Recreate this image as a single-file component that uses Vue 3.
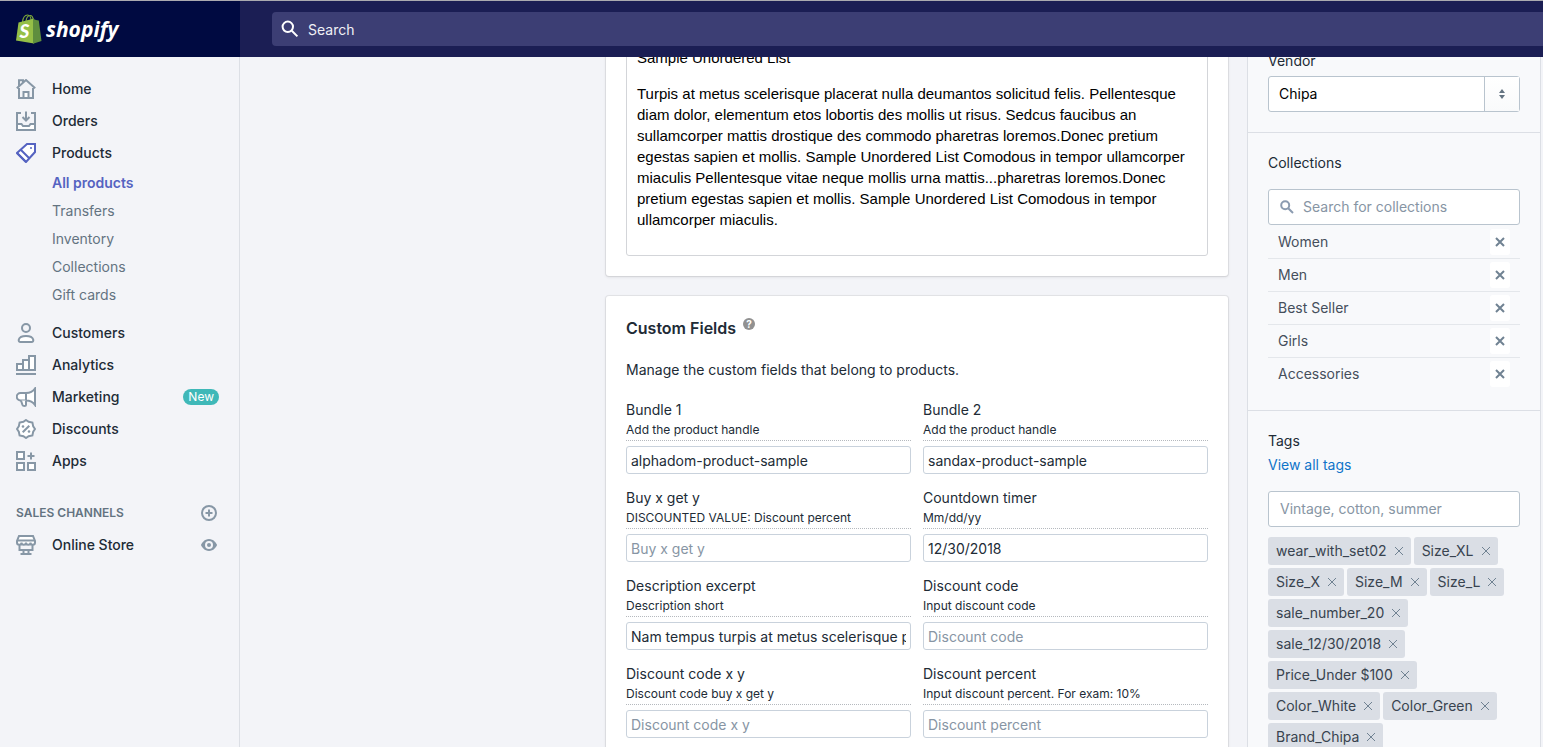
<script setup>
import { ref } from 'vue'

const productLinks = ['All products', 'Transfers', 'Inventory', 'Collections', 'Gift cards']

const fields = ref([
  { id: 'bundle-1', label: 'Bundle 1', hint: 'Add the product handle', value: 'alphadom-product-sample' },
  { id: 'bundle-2', label: 'Bundle 2', hint: 'Add the product handle', value: 'sandax-product-sample' },
  { id: 'buy-x', label: 'Buy x get y', hint: 'DISCOUNTED VALUE: Discount percent', value: '' },
  { id: 'timer', label: 'Countdown timer', hint: 'Mm/dd/yy', value: '12/30/2018' },
  { id: 'excerpt', label: 'Description excerpt', hint: 'Description short', value: 'Nam tempus turpis at metus scelerisque placerat' },
  { id: 'code', label: 'Discount code', hint: 'Input discount code', value: '' },
  { id: 'code-xy', label: 'Discount code x y', hint: 'Discount code buy x get y', value: '' },
  { id: 'percent', label: 'Discount percent', hint: 'Input discount percent. For exam: 10%', value: '' },
])

const collections = ref(['Women', 'Men', 'Best Seller', 'Girls', 'Accessories'])
const tags = ref([
  'wear_with_set02', 'Size_XL', 'Size_X', 'Size_M', 'Size_L', 'sale_number_20',
  'sale_12/30/2018', 'Price_Under $100', 'Color_White', 'Color_Green', 'Brand_Chipa',
])
const vendor = ref('Chipa')
const remove = (list, i) => list.splice(i, 1)
</script>

<template>
  <div class="app">
    <header class="topbar">
      <a class="brand" href="#">
        <svg class="bag" viewBox="0 0 26 30" aria-hidden="true">
          <path d="M6.500 8C7 4 9 1 11.500 1c2.500 0 3.500 2.500 3.700 6M10 7c.5-3.500 2.500-5.500 4.300-5.500S17 4 17.200 6" fill="none" stroke="#7ba83a" stroke-width="1.200" />
          <path d="M2.500 8.500 18 4.500v25L0 26.500z" fill="#95bf47" />
          <path d="M17 4.800 20 6l2.800.6L25.500 27 17 29.700z" fill="#5e8e3e" />
          <text x="3.500" y="23.500" class="bag-letter">S</text>
        </svg>
        <span class="wordmark">shopify</span>
      </a>
      <div class="search-zone">
        <label class="search">
          <svg viewBox="0 0 18 18" aria-hidden="true"><circle cx="6.800" cy="6.800" r="5.200" /><path d="m10.800 10.800 5.600 5.600" /></svg>
          <input type="search" placeholder="Search" aria-label="Search" />
        </label>
      </div>
    </header>

    <div class="body">
      <nav class="nav">
        <a class="item" href="#">
          <svg viewBox="0 0 20 20" aria-hidden="true"><path d="M3 9v10h14V9" /><path d="M.8 9.200 10 1l9.200 8.200M3 7V1.200h4V3" /><path class="lit" d="M7.500 19v-6h5v6z" /></svg>
          <span>Home</span>
        </a>
        <a class="item" href="#">
          <svg viewBox="0 0 20 20" aria-hidden="true"><path d="M5 2H1v17h18V2h-4" /><path class="lit" d="M1 13h4.500l1.500 2h6l1.500-2H19v6H1z" /><path d="M10 .5v8.500M6.500 6 10 9.500 13.500 6" /></svg>
          <span>Orders</span>
        </a>
        <a class="item current" href="#">
          <svg viewBox="0 0 20 20" aria-hidden="true"><path class="lit" d="M11 1h8v8L10 19l-9-9z" /><path d="m4.500 6.500 9 9M1 10l9 9" /><circle class="dot" cx="15" cy="5" r="1" /></svg>
          <span>Products</span>
        </a>
        <div class="sub">
          <a v-for="(link, i) in productLinks" :key="link" href="#" :class="{ active: i === 0 }">{{ link }}</a>
        </div>
        <a class="item" href="#">
          <svg viewBox="0 0 20 20" aria-hidden="true"><circle cx="10" cy="5" r="4" /><path class="lit" d="M2.800 16.500C3.500 14 6.500 13 10 13s6.500 1 7.200 3.500c.4 1.500-.4 2.500-1.700 2.500h-11c-1.300 0-2.100-1-1.700-2.500z" /></svg>
          <span>Customers</span>
        </a>
        <a class="item" href="#">
          <svg viewBox="0 0 20 20" aria-hidden="true"><path class="lit" d="M1 9h6v6H1zM7 5h6v10H7zM13 1h6v14h-6z" /><path d="M0 19h20" /></svg>
          <span>Analytics</span>
        </a>
        <a class="item" href="#">
          <svg viewBox="0 0 20 20" aria-hidden="true"><path class="lit" d="M10 6v7.500H4.500a3.700 3.700 0 0 1 0-7.500zM10 6c4 0 7-1.500 9-4.500v16.500c-2-3-5-4.500-9-4.500z" /><path class="lit" d="m5 13.500 1.500 4.500c.4 1.300 3.500 1.300 3.500 0v-4.500" /></svg>
          <span>Marketing</span>
          <span class="badge">New</span>
        </a>
        <a class="item" href="#">
          <svg viewBox="0 0 20 20" aria-hidden="true"><path class="lit" d="m10 1 2.600 1.800 3.800.8.800 3.800L19 10l-1.800 2.600-.8 3.800-3.800.8L10 19l-2.600-1.800-3.800-.8-.8-3.800L1 10l1.800-2.600.8-3.800 3.800-.8z" /><path d="m6.700 13.300 6.600-6.600" /><circle class="dot" cx="7" cy="7.500" r="1.300" /><circle class="dot" cx="13" cy="12.500" r="1.300" /></svg>
          <span>Discounts</span>
        </a>
        <a class="item" href="#">
          <svg viewBox="0 0 20 20" aria-hidden="true"><path class="lit" d="M1 1h7v7H1zM1 12h7v7H1zM12 12h7v7h-7z" /><path d="M15 1.500v7M11.500 5h7" /></svg>
          <span>Apps</span>
        </a>
        <div class="channels">
          <h2>SALES CHANNELS</h2>
          <button type="button" aria-label="Add sales channel">
            <svg viewBox="0 0 16 16" aria-hidden="true"><circle cx="8" cy="8" r="7" /><path d="M8 4.500v7M4.500 8h7" /></svg>
          </button>
        </div>
        <div class="item">
          <svg viewBox="0 0 20 20" aria-hidden="true"><path class="lit" d="M3 1h14l2 5v1.500a2.200 2.200 0 0 1-4.500 0 2.200 2.200 0 0 1-4.500 0 2.200 2.200 0 0 1-4.500 0A2.200 2.200 0 0 1 1 7.500V6z" /><path d="M1 5.500h18M3.500 9.500V15h13V9.500M7.500 15v3.500M12.500 15v3.500M4.500 19h11" /></svg>
          <a href="#">Online Store</a>
          <button class="eye" type="button" aria-label="View online store">
            <svg viewBox="0 0 16 16" aria-hidden="true"><path d="M8 2C3.500 2 .8 5.800 0 8c.8 2.200 3.500 6 8 6s7.200-3.800 8-6c-.8-2.200-3.500-6-8-6z" /><circle class="ring" cx="8" cy="8" r="3" /></svg>
          </button>
        </div>
      </nav>

      <main class="main">
        <div class="page">
          <div class="primary">
            <section class="card description">
              <div class="editor">
                <p>Sample Unordered List</p>
                <p>Turpis at metus scelerisque placerat nulla deumantos solicitud felis. Pellentesque diam dolor, elementum etos lobortis des mollis ut risus. Sedcus faucibus an sullamcorper mattis drostique des commodo pharetras loremos.Donec pretium egestas sapien et mollis. Sample Unordered List Comodous in tempor ullamcorper miaculis Pellentesque vitae neque mollis urna mattis...pharetras loremos.Donec pretium egestas sapien et mollis. Sample Unordered List Comodous in tempor ullamcorper miaculis.</p>
              </div>
            </section>
            <section class="card custom">
              <div class="title">
                <h2>Custom Fields</h2>
                <button type="button" aria-label="Help">?</button>
              </div>
              <p>Manage the custom fields that belong to products.</p>
              <div class="fields">
                <div v-for="f in fields" :key="f.id" class="field">
                  <label :for="f.id">{{ f.label }}</label>
                  <small>{{ f.hint }}</small>
                  <input :id="f.id" v-model="f.value" type="text" :placeholder="f.label" />
                </div>
              </div>
            </section>
          </div>

          <aside class="aside">
            <section class="vendor">
              <label for="vendor">Vendor</label>
              <div class="select">
                <select id="vendor" v-model="vendor"><option>Chipa</option></select>
                <span class="stepper">
                  <svg viewBox="0 0 6 10" aria-hidden="true"><path d="M0 4 3 0l3 4zM0 6h6l-3 4z" /></svg>
                </span>
              </div>
            </section>
            <section>
              <label for="collections">Collections</label>
              <div class="textbox">
                <svg viewBox="0 0 14 14" aria-hidden="true"><circle cx="5.200" cy="5.200" r="4" /><path d="m8.200 8.200 4.800 4.800" /></svg>
                <input id="collections" type="text" placeholder="Search for collections" />
              </div>
              <ul class="rows">
                <li v-for="(c, i) in collections" :key="c">
                  <span>{{ c }}</span>
                  <button type="button" :aria-label="`Remove ${c}`" @click="remove(collections, i)">
                    <svg viewBox="0 0 10 10" aria-hidden="true"><path d="m1 1 8 8M9 1 1 9" /></svg>
                  </button>
                </li>
              </ul>
            </section>
            <section>
              <label for="tags">Tags</label>
              <a class="all" href="#">View all tags</a>
              <div class="textbox">
                <input id="tags" type="text" placeholder="Vintage, cotton, summer" />
              </div>
              <ul class="tags">
                <li v-for="(t, i) in tags" :key="t">
                  <span>{{ t }}</span>
                  <button type="button" :aria-label="`Remove ${t}`" @click="remove(tags, i)">
                    <svg viewBox="0 0 8 8" aria-hidden="true"><path d="m0 0 8 8M8 0 0 8" /></svg>
                  </button>
                </li>
              </ul>
            </section>
          </aside>
        </div>
      </main>
    </div>
  </div>
</template>

<style>
body {
  margin: 0;
  background: #f3f4f8;
}
</style>

<style scoped>
* {
  box-sizing: border-box;
}
.app {
  display: flex;
  flex-direction: column;
  height: 100vh;
  overflow: hidden;
  font: 14px/20px Inter, "Liberation Sans", sans-serif;
  color: #212b36;
}
h2, p, ul {
  margin: 0;
  padding: 0;
}
ul {
  list-style: none;
}
a {
  color: inherit;
  text-decoration: none;
}
input, select, button {
  font: inherit;
  color: inherit;
  border: 0;
  padding: 0;
  margin: 0;
  background: none;
  min-width: 0;
}
button {
  display: flex;
  align-items: center;
  justify-content: center;
}
svg {
  display: block;
  flex: none;
  fill: none;
  stroke: currentColor;
}
input::placeholder {
  color: #8795a4;
  opacity: 1;
}

/* Top bar */
.topbar {
  display: flex;
  flex: none;
  height: 57px;
  border-top: 1px solid #aaaab0;
  background: #1b1e54;
}
.brand {
  display: flex;
  align-items: center;
  gap: 4px;
  width: 240px;
  padding-left: 16px;
  background: #000a41;
  color: #fff;
}
.bag {
  width: 26px;
  height: 30px;
  stroke: none;
}
.bag-letter {
  fill: #fff;
  font: italic 900 19px Lato, sans-serif;
}
.wordmark {
  font: italic 700 21px/30px "Open Sans", sans-serif;
}
.search-zone {
  flex: 1;
  padding: 11px 0 11px 32px;
}
.search {
  display: flex;
  align-items: center;
  gap: 9px;
  height: 34px;
  padding-left: 9px;
  border-radius: 4px 0 0 4px;
  background: #3c3e74;
  color: #fff;
}
.search svg {
  width: 18px;
  height: 18px;
  stroke-width: 2;
}
.search input {
  flex: 1;
  padding-top: 2px;
}
.search input::placeholder {
  color: #f0f0f6;
}

/* Side navigation */
.body {
  display: flex;
  flex: 1;
  min-height: 0;
}
.nav {
  width: 240px;
  flex: none;
  padding: 16px 20px 0 16px;
  border-right: 1px solid #dcdfe5;
}
.item {
  display: flex;
  align-items: center;
  gap: 16px;
  height: 32px;
  font-weight: 500;
}
.item svg {
  width: 20px;
  height: 20px;
  color: #8797a6;
  stroke-width: 2;
}
.item .lit {
  fill: #fff;
}
.item .dot {
  fill: currentColor;
  stroke: none;
}
.item.current svg {
  color: #5563c1;
}
.badge {
  margin-left: auto;
  padding: 0 5px;
  border-radius: 8px;
  background: #3fb8b8;
  color: #fff;
  font-size: 12px;
  font-weight: 400;
  line-height: 16px;
}
.sub {
  padding: 0 0 8px 36px;
  color: #637381;
}
.sub a {
  display: block;
  line-height: 28px;
}
.sub .active {
  color: #5563c1;
  font-weight: 600;
}
.channels {
  display: flex;
  align-items: center;
  justify-content: space-between;
  height: 32px;
  margin-top: 20px;
  padding-right: 2px;
  color: #637381;
}
.channels h2 {
  font-size: 12px;
  font-weight: 600;
}
.channels svg {
  width: 16px;
  height: 16px;
  color: #8797a6;
  stroke-width: 2;
}
.eye {
  margin-left: auto;
  padding-right: 2px;
}
.eye svg {
  width: 16px;
  height: 16px;
  fill: currentColor;
  stroke: none;
}
.eye .ring {
  stroke: #f3f4f8;
  stroke-width: 2;
}

/* Page */
.main {
  flex: 1;
  min-width: 0;
  overflow: hidden;
}
.page {
  display: flex;
  gap: 19px;
  max-width: 935px;
  margin: 0 2px 0 auto;
}
.primary {
  flex: 1;
  min-width: 0;
}
.card {
  padding: 20px;
  border-radius: 3px;
  background: #fff;
  box-shadow: 0 0 0 1px rgba(63, 63, 68, 0.08), 0 1px 3px rgba(63, 63, 68, 0.15);
}
.description {
  padding-top: 0;
  margin-bottom: 20px;
}
.editor {
  margin-top: -11px;
  padding: 0 10px 25px;
  border: 1px solid #d3d5d9;
  border-radius: 3px;
  font: 15px/21px "Liberation Sans", Arial, sans-serif;
  color: #000;
}
.editor p + p {
  margin-top: 15px;
}
.title {
  display: flex;
  gap: 7px;
  height: 24px;
}
.title h2 {
  font-size: 16px;
  font-weight: 600;
  line-height: 24px;
}
.title button {
  width: 12px;
  height: 12px;
  margin-top: 2px;
  border-radius: 50%;
  background: #919191;
  color: #fff;
  font-size: 10px;
  font-weight: 700;
  line-height: 12px;
}
.custom > p {
  margin: 20px 0;
}
.fields {
  display: grid;
  grid-template-columns: 1fr 1fr;
  gap: 14px 12px;
}
.field {
  display: flex;
  flex-direction: column;
  min-width: 0;
}
.field small {
  margin-bottom: 5px;
  border-bottom: 1px dotted #b5b9be;
  font-size: 12px;
}
.field input {
  height: 28px;
  padding: 0 4px;
  border: 1px solid #c9d2dc;
  border-radius: 3px;
  background: #fff;
}

/* Right column */
.aside {
  width: 294px;
  flex: none;
  border: solid #dcdfe5;
  border-width: 0 1px;
  background: #f8f9fb;
}
.aside section {
  padding: 20px;
}
.aside section + section {
  border-top: 1px solid #dcdfe5;
}
.aside .vendor {
  padding-top: 0;
  margin-top: -6px;
}
.aside label {
  display: block;
}
.select, .textbox {
  display: flex;
  align-items: center;
  height: 36px;
  border: 1px solid #b9c4ce;
  border-radius: 3px;
  background: #fff;
}
.select {
  margin-top: 5px;
}
.select select {
  flex: 1;
  align-self: stretch;
  padding-left: 10px;
  appearance: none;
  color: #000;
}
.stepper {
  display: flex;
  align-items: center;
  justify-content: center;
  width: 35px;
  align-self: stretch;
  border-left: 1px solid #b9c4ce;
  background: linear-gradient(#fff, #f9fafb);
}
.stepper svg {
  width: 6px;
  height: 10px;
  fill: #637381;
  stroke: none;
}
.textbox {
  gap: 9px;
  margin-top: 16px;
  padding: 0 11px;
}
.textbox svg {
  width: 14px;
  height: 14px;
  color: #8b9bb0;
  stroke-width: 2;
}
.textbox input {
  flex: 1;
}
.rows {
  margin-top: 1px;
}
.rows li {
  display: flex;
  align-items: center;
  justify-content: space-between;
  padding: 3px 10px;
  color: #454f5b;
}
.rows li + li {
  border-top: 1px solid #e4e7eb;
}
.rows button {
  width: 20px;
  height: 26px;
  border-radius: 3px;
  background: #fff;
}
.rows svg {
  width: 10px;
  height: 10px;
  color: #708292;
  stroke-width: 2;
}
.all {
  display: block;
  width: fit-content;
  margin-top: 4px;
  color: #0f74c9;
}
.tags {
  display: flex;
  flex-wrap: wrap;
  gap: 3px;
  margin-top: 10px;
}
.tags li {
  display: flex;
  align-items: center;
  gap: 8px;
  height: 28px;
  padding: 0 8px;
  border-radius: 3px;
  background: #dadee5;
  color: #38434f;
}
.tags svg {
  width: 8px;
  height: 8px;
  color: #708292;
}
</style>
